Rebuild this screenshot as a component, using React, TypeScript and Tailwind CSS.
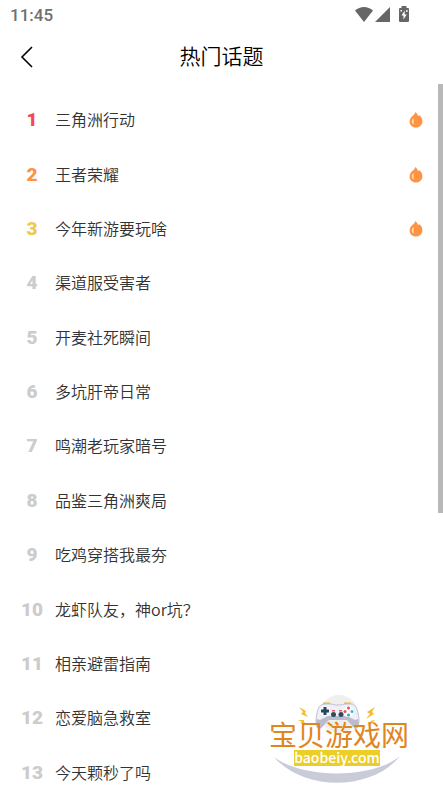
const topics = [
  "三角洲行动",
  "王者荣耀",
  "今年新游要玩啥",
  "渠道服受害者",
  "开麦社死瞬间",
  "多坑肝帝日常",
  "鸣潮老玩家暗号",
  "品鉴三角洲爽局",
  "吃鸡穿搭我最夯",
  "龙虾队友，神or坑？",
  "相亲避雷指南",
  "恋爱脑急救室",
  "今天颗秒了吗",
];

const rankColors = ["text-[#f04a57]", "text-[#fb9347]", "text-[#edc94c]"];

function StatusBar() {
  return (
    <div className="flex h-[30px] items-center justify-between pl-[10px] pr-[33px] text-[#666666]">
      <span className="font-['Roboto',sans-serif] text-[17px] font-medium leading-[30px] text-[#707070]">11:45</span>
      <svg width="55" height="18" viewBox="0 0 55 18" fill="currentColor" aria-hidden="true">
        <path d="M0 4.5C5-.2 13-.2 18 4.500L9 16Z" />
        <path d="M35 1V16H20Z" />
        <path
          fillRule="evenodd"
          d="M46.500 0h5v2h1.500q1 0 1 1v12q0 1-1 1h-8q-1 0-1-1V3q0-1 1-1h1.500zM49.700 4.500l-3.200 5h2v4l3.200-5h-2z"
        />
        <path d="M45.500 4h1.500v1.500h-1.500zM51.200 4h1.300v2h-1.300z" fill="#ffffff" />
      </svg>
    </div>
  );
}

function Header() {
  return (
    <header className="grid h-[54px] grid-cols-[1fr_auto_1fr] items-center px-4 text-black">
      <button type="button" aria-label="返回" className="flex h-8 w-5 items-center justify-center">
        <svg width="14" height="22" viewBox="0 0 14 22" fill="none" stroke="currentColor" strokeWidth="1.600" aria-hidden="true">
          <path d="M13 1L3 11L13 21" />
        </svg>
      </button>
      <h1 className="pb-1 text-[21px] font-[350] leading-[30px]">热门话题</h1>
    </header>
  );
}

function Flame() {
  return (
    <svg width="14" height="16" viewBox="0 0 14 16" aria-label="热门" role="img">
      <path
        d="M6.300 0C7.800 1.300 8.600 2.300 8.800 3.700C9.700 3.800 10.100 3.500 10.300 3.200C12.300 4.700 13.400 6.700 13.400 9C13.400 12.900 10.700 15.600 7 15.600S.6 12.900.6 9.500C.6 6.800 2 5 4 3.500C5.200 2.500 6 1.500 6.300 0Z"
        fill="#ff9344"
      />
      <path d="M4.600 6.300C2.200 7.500 2.200 11.300 4.600 12.500Z" fill="#ffe3b5" />
    </svg>
  );
}

function SiteLogo() {
  return (
    <svg width="144" height="94" viewBox="0 0 144 94" role="img" aria-label="宝贝游戏网 baobeiy.com">
      <circle cx="70" cy="20" r="19" fill="#efefed" />
      {/* Smile under the name */}
      <path d="M5 63C34 97 102 98 131 62C104 85 34 85 5 63Z" fill="#c9cbd9" />
      {/* Gamepad */}
      <g transform="translate(-1 0)">
        <path d="M55 11V8.500h7V11M76 11V8.500h7V11" fill="#f0b83c" />
        <path
          d="M57 10H63C65 10 66 11 68 11H72C74 11 75 10 77 10H83C87 10 89 14 90 19C91 24 92 30 89 33C87 35 85 32 83 29L79 24H61L56 30C54 33 52 35 50 34C47 31 48 24 49 19C50 14 52 10 57 10Z"
          fill="#f0eff6"
          stroke="#bfc2d4"
        />
        <path d="M49 25L52 26L60 22H79L87 26L90 25C92 30 90 36 87 35L79 26H61L53 34C49 37 47 31 49 25Z" fill="#b9bccd" />
        <circle cx="57" cy="17" r="5" fill="#fbfbfd" />
        <path d="M55.500 13h3v2.500h2.500v3h-2.500v2.500h-3v-2.500h-2.500v-3h2.500z" fill="#24485a" />
        <circle cx="80.500" cy="17.500" r="5.500" fill="#fbfbfd" />
        <circle cx="80.500" cy="14" r="1.500" fill="#ef4e50" />
        <circle cx="77" cy="17.500" r="1.500" fill="#ef4e50" />
        <circle cx="84" cy="17.500" r="1.500" fill="#43b9c6" />
        <circle cx="80.500" cy="21" r="1.500" fill="#3d9ec0" />
        <path d="M64 16h3v1.500h-3zM71 16h3v1.500h-3z" fill="#e95865" />
        <circle cx="65.500" cy="20.500" r="2.500" fill="#31495b" />
        <circle cx="73" cy="20.500" r="2.500" fill="#31495b" />
      </g>
      {/* Sparks */}
      <path
        d="M30 13L37 17L36 19L39 23L32 20L34 18ZM29 26L35 26L35 28L37 30L31 29L33 28ZM106 13L98 18L101 20L97 25L105 20L103 18ZM106 26L101 27L102 28L98 31L105 29L104 28Z"
        fill="#f2bd32"
      />
      <text x="0" y="52" className="font-['Noto_Sans_CJK_SC',sans-serif] text-[28px]" fill="#df861e">
        宝贝游戏网
      </text>
      <rect x="25" y="56" width="86" height="16" fill="#ecce29" />
      <text x="68" y="69" textAnchor="middle" className="font-['Noto_Sans_CJK_SC',sans-serif] text-[14px] font-medium" fill="#ffffff">
        baobeiy.com
      </text>
    </svg>
  );
}

export default function App() {
  return (
    <div className="relative flex h-screen flex-col overflow-hidden bg-white font-['Noto_Sans_CJK_SC',sans-serif]">
      <StatusBar />
      <Header />
      <main className="relative min-h-0 flex-1">
        <div className="h-full overflow-y-auto [scrollbar-width:none]">
          <ol className="grid min-h-[716px] auto-rows-fr pt-[9px]">
            {topics.map((topic, i) => (
              <li key={topic} className="flex items-center pl-4 pr-5">
                <span
                  className={`w-8 text-center font-['Roboto',sans-serif] text-[19px] font-black leading-6 ${rankColors[i] ?? "text-[#cccccc]"}`}
                >
                  {i + 1}
                </span>
                <a href="#" className="ml-[7px] flex-1 pb-0.5 text-[16px] font-[350] leading-6 text-[#333333]">
                  {topic}
                </a>
                {i < 3 && <Flame />}
              </li>
            ))}
          </ol>
        </div>
        {/* Scroll thumb */}
        <div className="absolute right-0 top-0 h-[61%] w-[5px] bg-[#b8b8b8]" />
      </main>
      <div className="pointer-events-none absolute bottom-0 right-[30px]">
        <SiteLogo />
      </div>
    </div>
  );
}
